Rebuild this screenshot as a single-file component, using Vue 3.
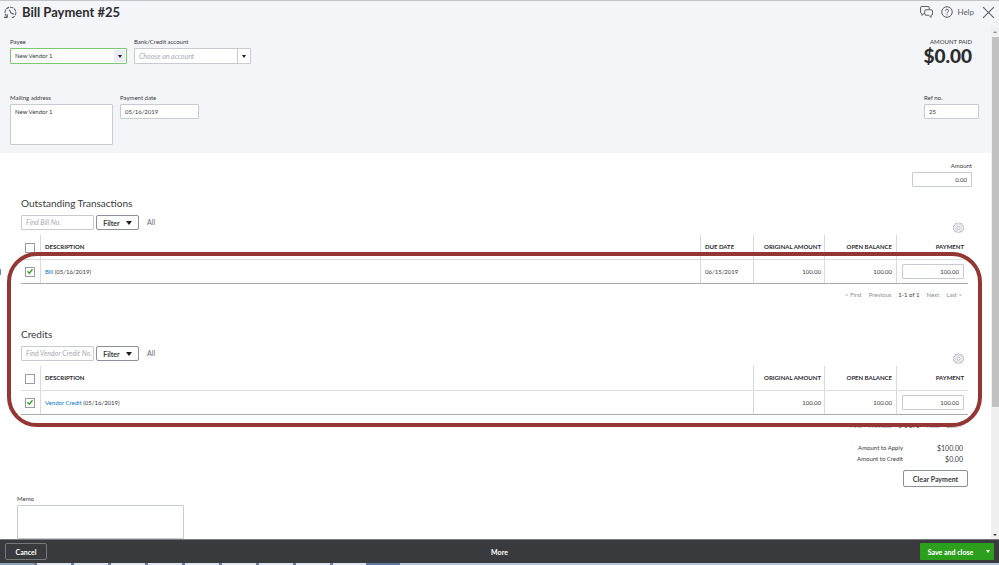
<script setup>
import { ref } from 'vue'

const payee = ref('New Vendor 1')
const account = ref('')
const address = ref('New Vendor 1')
const paymentDate = ref('05/16/2019')
const refNo = ref('25')
const amount = ref('0.00')
const memo = ref('')

const sections = ref([
  {
    id: 'bills',
    title: 'Outstanding Transactions',
    hint: 'Find Bill No.',
    search: '',
    all: false,
    hasDue: true,
    rows: [{ checked: true, name: 'Bill', date: '05/16/2019', due: '06/15/2019', original: '100.00', open: '100.00', payment: '100.00' }],
  },
  {
    id: 'credits',
    title: 'Credits',
    hint: 'Find Vendor Credit No.',
    search: '',
    all: false,
    hasDue: false,
    rows: [{ checked: true, name: 'Vendor Credit', date: '05/16/2019', original: '100.00', open: '100.00', payment: '100.00' }],
  },
])
</script>

<template>
  <div class="page">
    <header class="titlebar">
      <svg class="history" viewBox="0 0 24 24" aria-hidden="true">
        <path d="M5 19.500A10 10 0 1 1 14 22" stroke-dasharray="6 1.500" />
        <path d="M0 21h6v-6M10 7l3 6 5 2" />
      </svg>
      <h1>Bill Payment #25</h1>
      <nav class="tools">
        <button class="icon-btn" aria-label="Feedback">
          <svg viewBox="0 0 26 24" class="chat">
            <path d="M9 15H7.500L4 19v-4H3.500A2.500 2.500 0 0 1 1 12.500v-9A2.500 2.500 0 0 1 3.500 1H16a2.500 2.500 0 0 1 2.500 2.500V6" />
            <path d="M12 7.500h10.500A2.500 2.500 0 0 1 25 10v6a2.500 2.500 0 0 1-2.500 2.500H22V23l-4.500-4.500H12A2.500 2.500 0 0 1 9.500 16v-6A2.500 2.500 0 0 1 12 7.500z" />
          </svg>
        </button>
        <a href="#help" class="help">
          <svg viewBox="0 0 24 24">
            <circle cx="12" cy="12" r="10.500" />
            <path d="M9 9.500a3 3 0 1 1 4.300 2.700c-1 .5-1.300 1-1.300 2.300M12 16.500v2" />
          </svg>
          <span>Help</span>
        </a>
        <button class="icon-btn" aria-label="Close">
          <svg viewBox="0 0 24 24" class="close"><path d="M2 2l20 20M22 2L2 22" /></svg>
        </button>
      </nav>
    </header>

    <div class="body">
      <main class="content">
        <section class="summary">
          <div class="line">
            <div class="field payee">
              <label for="payee">Payee</label>
              <div class="combo active">
                <select id="payee" v-model="payee"><option>New Vendor 1</option></select>
                <span class="arrow"></span>
              </div>
            </div>
            <div class="field account">
              <label for="account">Bank/Credit account</label>
              <div class="combo empty">
                <select id="account" v-model="account"><option value="">Choose an account</option></select>
                <span class="arrow"></span>
              </div>
            </div>
            <div class="paid">
              <span>AMOUNT PAID</span>
              <strong>$0.00</strong>
            </div>
          </div>
          <div class="line">
            <div class="field mailing">
              <label for="address">Mailing address</label>
              <textarea id="address" v-model="address"></textarea>
            </div>
            <div class="field date">
              <label for="date">Payment date</label>
              <input id="date" v-model="paymentDate" type="text" />
            </div>
            <div class="field refno">
              <label for="refno">Ref no.</label>
              <input id="refno" v-model="refNo" type="text" />
            </div>
          </div>
        </section>

        <div class="field amount">
          <label for="amount">Amount</label>
          <input id="amount" v-model="amount" type="text" class="num" />
        </div>

        <div class="lists">
          <section v-for="s in sections" :key="s.id" class="list">
            <h2>{{ s.title }}</h2>
            <div class="filters">
              <input v-model="s.search" type="text" :placeholder="s.hint" :aria-label="s.hint" />
              <button class="filter">Filter <span class="tri"></span></button>
              <span class="all">All</span>
              <button class="icon-btn gear" aria-label="Settings">
                <svg viewBox="0 0 24 24">
                  <path d="M12 1l3 3 4-.8.8 4L23.500 9 22 12.500l1.500 3.500-3.700 1.800-.8 4-4-.8-3 3-3-3-4 .8-.8-4L.5 16 2 12.500.5 9l3.700-1.800.8-4L9 4z" />
                  <circle cx="12" cy="12.500" r="7" stroke-width="1" />
                  <circle cx="12" cy="12.500" r="3.500" />
                </svg>
              </button>
            </div>
            <table>
              <thead>
                <tr>
                  <th class="c-check"><input v-model="s.all" type="checkbox" aria-label="Select all" /></th>
                  <th>DESCRIPTION</th>
                  <th v-if="s.hasDue" class="c-due">DUE DATE</th>
                  <th class="c-orig r">ORIGINAL AMOUNT</th>
                  <th class="c-open r">OPEN BALANCE</th>
                  <th class="c-pay r">PAYMENT</th>
                </tr>
              </thead>
              <tbody>
                <tr v-for="row in s.rows" :key="row.name">
                  <td class="c-check"><input v-model="row.checked" type="checkbox" :aria-label="row.name" /></td>
                  <td><a href="#transaction">{{ row.name }}</a> ({{ row.date }})</td>
                  <td v-if="s.hasDue">{{ row.due }}</td>
                  <td class="c-orig r">{{ row.original }}</td>
                  <td class="r">{{ row.open }}</td>
                  <td class="pay"><input v-model="row.payment" type="text" class="num" aria-label="Payment" /></td>
                </tr>
              </tbody>
            </table>
            <div class="pager">
              <span>&lt; First</span><span>Previous</span><span class="now">1-1 of 1</span><span>Next</span><span>Last &gt;</span>
            </div>
          </section>
          <div class="edge-mark"></div>
          <div class="highlight"></div>
        </div>

        <div class="totals">
          <dl>
            <dt>Amount to Apply</dt><dd>$100.00</dd>
            <dt>Amount to Credit</dt><dd>$0.00</dd>
          </dl>
          <button class="clear">Clear Payment</button>
        </div>

        <div class="field memo">
          <label for="memo">Memo</label>
          <textarea id="memo" v-model="memo"></textarea>
        </div>
      </main>
      <div class="scrollbar" aria-hidden="true">
        <span class="up"></span>
        <span class="thumb"></span>
        <span class="rest"></span>
        <span class="down"></span>
      </div>
    </div>

    <footer class="footer">
      <button class="cancel">Cancel</button>
      <button class="more">More</button>
      <div class="save">
        <button>Save and close</button>
        <button class="drop" aria-label="More save options"><span class="tri"></span></button>
      </div>
    </footer>
    <div class="strip"></div>
  </div>
</template>

<style>
body {
  margin: 0;
}
</style>

<style scoped>
* {
  box-sizing: border-box;
}
.page {
  display: flex;
  flex-direction: column;
  height: 100vh;
  overflow: hidden;
  font-family: Lato, "Open Sans", sans-serif;
  font-size: 6px;
  line-height: 8px;
  color: #393a3d;
  background: #fff;
}
input,
textarea,
select,
button {
  font: inherit;
  color: inherit;
  margin: 0;
}
button {
  cursor: pointer;
}
svg {
  display: block;
  fill: none;
  stroke: #5d5f66;
  stroke-width: 2;
}
.titlebar {
  flex: none;
  display: flex;
  align-items: center;
  height: 27px;
  padding: 0 4px 4px;
  border-top: 1px solid #c4c5cc;
  background: #f4f5f8;
}
.history {
  width: 13px;
  height: 13px;
}
h1 {
  margin: 0 0 0 5px;
  font-size: 13px;
  line-height: 16px;
  font-weight: 700;
  color: #2b2c2f;
}
.tools {
  display: flex;
  align-items: center;
  gap: 8px;
  margin-left: auto;
}
.icon-btn {
  padding: 0;
  border: 0;
  background: none;
}
.chat {
  width: 13px;
  height: 12px;
}
.help {
  display: flex;
  align-items: center;
  gap: 4px;
  font-size: 8px;
  color: #5d5f66;
  text-decoration: none;
}
.help svg {
  width: 12px;
  height: 12px;
}
.close {
  width: 13px;
  height: 13px;
}
.body {
  flex: 1;
  min-height: 0;
  display: flex;
}
.content {
  flex: 1;
  min-width: 0;
  overflow: hidden;
}
.summary {
  height: 126px;
  padding: 11px 12px 0 10px;
  background: #f4f5f8;
}
.line {
  display: flex;
  gap: 7px;
  height: 56px;
}
.field {
  display: flex;
  flex-direction: column;
  gap: 2px;
}
.field label {
  color: #393a3d;
  white-space: nowrap;
}
input[type="text"],
textarea,
.combo {
  width: 100%;
  height: 15px;
  padding: 0 4px;
  border: 1px solid #c9cbd3;
  border-radius: 1px;
  background: #fff;
  outline: none;
}
textarea {
  display: block;
  height: 41px;
  padding: 3px 4px;
  resize: none;
  overflow: hidden;
}
.payee,
.account {
  width: 117px;
}
.mailing {
  width: 103px;
}
.date {
  width: 79px;
}
.refno {
  width: 55px;
  margin-left: auto;
}
.combo {
  display: grid;
  grid-template-columns: 1fr 13px;
  height: 16px;
  padding: 0;
}
.combo select {
  grid-area: 1 / 1 / 2 / 3;
  appearance: none;
  padding: 0 16px 0 4px;
  border: 0;
  background: none;
  outline: none;
}
.combo.active {
  border-color: #7acb70;
}
.combo.active .arrow {
  background: #ebecf1;
  margin: 1px;
  border: 0;
}
.combo.empty select {
  font-size: 7px;
  font-style: italic;
  color: #a9abb3;
}
.arrow {
  grid-area: 1 / 2;
  display: grid;
  place-items: center;
  border-left: 1px solid #c9cbd3;
  pointer-events: none;
}
.arrow::before,
.tri {
  content: "";
  display: block;
  border: 3px solid transparent;
  border-top: 4px solid #1d1d1f;
  border-bottom: 0;
}
.arrow::before {
  border-width: 3px 2px 0;
}
.paid {
  display: flex;
  flex-direction: column;
  align-items: flex-end;
  margin-left: auto;
  padding-right: 7px;
}
.paid strong {
  font-size: 19px;
  line-height: 20px;
  font-weight: 900;
  color: #2b2c2f;
}
.num {
  text-align: right;
}
.amount {
  width: 60px;
  margin: 9px 19px 0 auto;
}
.amount label {
  text-align: right;
}
.lists {
  position: relative;
  padding: 10px 23px 0 21px;
}
.list {
  height: 131px;
}
h2 {
  margin: 0;
  font-size: 10px;
  line-height: 12px;
  font-weight: 400;
}
.filters {
  display: flex;
  align-items: flex-start;
  gap: 2px;
  margin-top: 6px;
  height: 20px;
}
.filters input[type="text"] {
  width: 73px;
  padding: 0 0 0 4px;
}
input::placeholder {
  font-size: 7px;
  font-style: italic;
  color: #a9abb3;
  opacity: 1;
}
.filter {
  display: flex;
  align-items: center;
  justify-content: center;
  gap: 6px;
  width: 43px;
  height: 15px;
  padding: 0;
  border: 1px solid #8d9096;
  border-radius: 2px;
  background: #fff;
  font-size: 7px;
  font-weight: 700;
}
.filter .tri {
  border-width: 4px 3px 0;
}
.all {
  margin: 3px 0 0 6px;
  font-size: 7px;
  color: #6b6c72;
}
.gear {
  margin: 7px 4px 0 auto;
}
.gear svg {
  width: 11px;
  height: 11px;
  stroke: #b0b3bb;
}
table {
  width: 100%;
  table-layout: fixed;
  border-collapse: separate;
  border-spacing: 0;
  border-bottom: 1px solid #a9abb0;
}
th,
td {
  padding: 0 4px;
  text-align: left;
  vertical-align: middle;
  border-left: 1px solid #d9dae0;
}
th {
  height: 25px;
  font-weight: 700;
  white-space: nowrap;
  color: #2b2c2f;
  border-bottom: 1px solid #dcdde3;
}
td {
  height: 23px;
}
th.r,
td.r {
  text-align: right;
}
th.c-check,
td.c-check {
  width: 19px;
  border-left: 0;
}
thead .c-check {
  padding-top: 2px;
}
.c-due {
  width: 53px;
}
.c-orig {
  width: 71px;
}
th.c-orig,
td.c-orig {
  padding-right: 3px;
}
.c-open,
.c-pay {
  width: 72px;
}
td.pay {
  padding: 0 4px 0 5px;
}
td.pay input {
  display: block;
}
input[type="checkbox"] {
  appearance: none;
  display: grid;
  place-items: center;
  width: 10px;
  height: 10px;
  border: 1px solid #9a9ca3;
  background: #fff;
}
input[type="checkbox"]:checked::before {
  content: "";
  width: 6px;
  height: 6px;
  background: #2ca01c;
  clip-path: polygon(0 55%, 15% 38%, 38% 62%, 84% 4%, 100% 20%, 40% 96%);
}
a {
  color: #0077c5;
  text-decoration: none;
}
.pager {
  display: flex;
  justify-content: flex-end;
  gap: 7px;
  padding: 7px 6px 0 0;
  color: #8d9096;
}
.now {
  color: #393a3d;
}
.edge-mark {
  position: absolute;
  top: 82px;
  left: 0;
  width: 1px;
  height: 6px;
  background: #5b8fc4;
}
.highlight {
  position: absolute;
  top: 65px;
  left: 7px;
  right: 9px;
  height: 175px;
  border: 4px solid #943634;
  border-radius: 30px;
  pointer-events: none;
}
.totals {
  display: flex;
  flex-direction: column;
  align-items: flex-end;
  margin-top: -15px;
  padding-right: 23px;
}
dl {
  display: grid;
  grid-template-columns: auto 60px;
  row-gap: 3px;
  margin: 0 5px 0 0;
  text-align: right;
}
dd {
  margin: 0;
  font-size: 7px;
}
.clear {
  width: 65px;
  height: 17px;
  margin-top: 7px;
  padding: 0;
  border: 1px solid #8d9096;
  border-radius: 2px;
  background: #fff;
  font-size: 7px;
  font-weight: 700;
}
.memo {
  width: 167px;
  margin: 8px 0 0 17px;
}
.memo textarea {
  height: 34px;
}
.scrollbar {
  flex: none;
  display: flex;
  flex-direction: column;
  align-items: center;
  width: 8px;
  background: #f0f0f1;
}
.up,
.down {
  border: 2px solid transparent;
}
.up {
  margin: 4px 0;
  border-top: 0;
  border-bottom: 2px solid #8a8a8a;
}
.down {
  margin: 3px 0;
  border-bottom: 0;
  border-top: 2px solid #3a3a3a;
}
.thumb {
  flex: 371;
  width: 7px;
  background: #c1c1c1;
}
.rest {
  flex: 124;
}
.footer {
  flex: none;
  display: grid;
  grid-template-columns: 1fr auto 1fr;
  align-items: center;
  height: 24px;
  padding: 0 5px;
  border-top: 1px solid #77787c;
  background: #393a3d;
  color: #fff;
  font-weight: 700;
}
.footer button {
  padding: 0;
  border: 0;
  background: none;
  font-size: 7px;
}
.footer .cancel {
  width: 42px;
  height: 17px;
  border: 1px solid #77787c;
  border-radius: 2px;
}
.save {
  justify-self: end;
  display: flex;
  width: 74px;
  height: 17px;
  border-radius: 1px;
  background: #2ca01c;
}
.save button {
  flex: 1;
  font-weight: 900;
}
.footer .save .drop {
  flex: none;
  display: grid;
  place-items: center;
  width: 13px;
}
.save .tri {
  border-width: 3px 2px 0;
  border-top-color: #fff;
}
.strip {
  flex: none;
  height: 2px;
  background: linear-gradient(90deg, #8fa3bd 0 34px, transparent 34px 366px, #5d7ba5 366px 400px, #b9c6d8 400px),
    repeating-linear-gradient(90deg, #dfe6ef 0 34px, #6d7f99 34px 37px);
}
</style>
